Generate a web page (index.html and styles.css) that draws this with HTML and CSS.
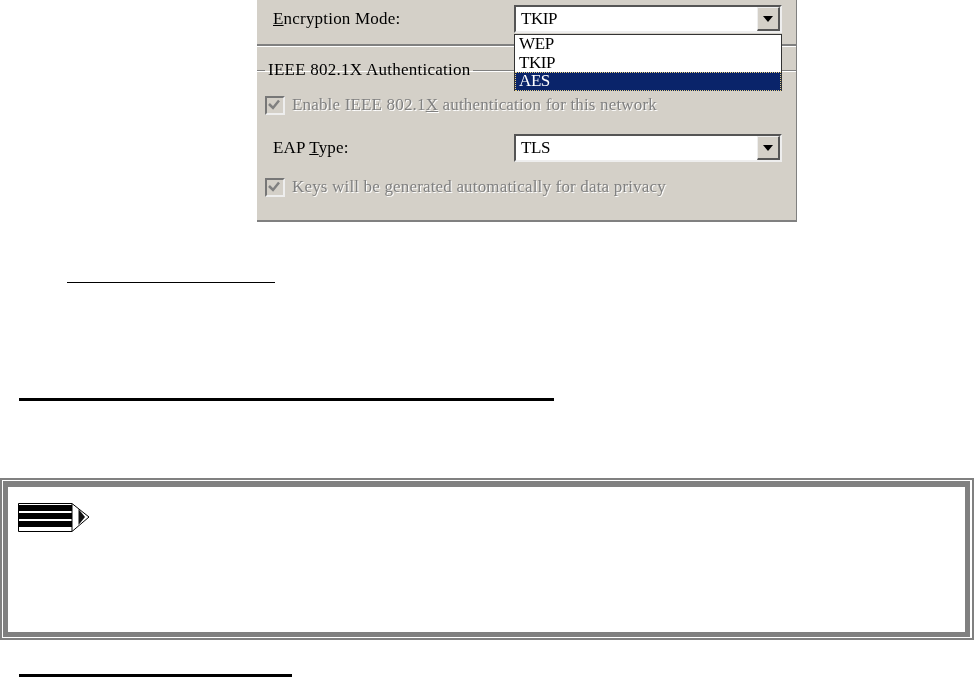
FILE: index.html
```html
<!DOCTYPE html>
<html lang="en">
<head>
    <meta charset="UTF-8">
    <title>Encryption Mode</title>
    <link rel="stylesheet" href="styles.css">
</head>
<body>

    <div class="dialog">
        <div class="top-row">
            <span class="field-label"><u>E</u>ncryption Mode:</span>
            <div class="combo-wrap">
                <div class="combo">
                    <span class="combo-text">TKIP</span>
                    <span class="combo-btn"><i class="arrow"></i></span>
                </div>
                <ul class="combo-list">
                    <li>WEP</li>
                    <li>TKIP</li>
                    <li class="selected">AES</li>
                </ul>
            </div>
        </div>

        <fieldset class="group">
            <legend>IEEE 802.1X Authentication</legend>
            <div class="check-row first-check">
                <span class="check"><svg width="14" height="13" viewBox="0 0 14 13"><path d="M2 6 L6 10 L12 2.5" fill="none" stroke="#808080" stroke-width="2.5"/></svg></span>
                <span class="disabled">Enable IEEE 802.1<u>X</u> authentication for this network</span>
            </div>
            <div class="eap-row">
                <span class="field-label">EAP <u>T</u>ype:</span>
                <div class="combo">
                    <span class="combo-text">TLS</span>
                    <span class="combo-btn"><i class="arrow"></i></span>
                </div>
            </div>
            <div class="check-row">
                <span class="check"><svg width="14" height="13" viewBox="0 0 14 13"><path d="M2 6 L6 10 L12 2.5" fill="none" stroke="#808080" stroke-width="2.5"/></svg></span>
                <span class="disabled">Keys will be generated automatically for data privacy</span>
            </div>
        </fieldset>
    </div>

    <div class="rule rule-short"></div>
    <div class="rule rule-heading"></div>

    <div class="note">
        <div class="note-inner">
            <svg class="pencil" width="72" height="29" viewBox="0 0 72 29">
                <path d="M0.5 0.5 H54 L71 14 L54 28.5 H0.5 Z" fill="#fff" stroke="#000"/>
                <rect x="1" y="2" width="53" height="6" fill="#000"/>
                <rect x="1" y="10" width="53" height="6" fill="#000"/>
                <rect x="1" y="18" width="53" height="6" fill="#000"/>
                <path d="M54 1 V28" fill="none" stroke="#000"/>
                <path d="M60.5 6 L67 14 L60.5 22 Z" fill="#111"/>
            </svg>
        </div>
    </div>

    <div class="rule rule-bottom"></div>

</body>
</html>
```

FILE: styles.css
```css
html, body {
    height: 677px;
    overflow: hidden;
}
body {
    margin: 0;
    background-color: #fff;
    font-family: "Liberation Serif", serif;
    color: #000;
}
.dialog {
    box-sizing: border-box;
    width: 540px;
    height: 222px;
    margin-left: 257px;
    background-color: #d4d0c8;
    border-right: 1px solid #808080;
    border-bottom: 2px solid #808080;
    font-size: 17px;
    filter: blur(0.35px);
}
.top-row {
    display: flex;
    align-items: flex-start;
    height: 46px;
    padding: 5px 0 0 16px;
    box-sizing: border-box;
    border-bottom: 2px solid #808080;
    box-shadow: 0 1px 0 #fff;
}
.field-label {
    width: 241px;
    padding-top: 4px;
    letter-spacing: 0.2px;
}
.combo-wrap {
    position: relative;
}
.combo {
    box-sizing: border-box;
    display: flex;
    justify-content: space-between;
    width: 268px;
    height: 28px;
    background-color: #fff;
    border: 2px solid;
    border-color: #555 #eee #eee #555;
}
.combo-text {
    padding: 2px 0 0 5px;
    font-size: 17px;
    letter-spacing: -0.4px;
}
.combo-btn {
    box-sizing: border-box;
    display: flex;
    align-items: center;
    justify-content: center;
    width: 23px;
    background-color: #d4d0c8;
    border: solid;
    border-width: 1px 2px 2px 1px;
    border-color: #eee #555 #555 #eee;
}
.arrow {
    border-top: 6px solid #000;
    border-left: 5px solid transparent;
    border-right: 5px solid transparent;
}
.combo-list {
    position: absolute;
    top: 29px;
    left: 0;
    box-sizing: border-box;
    width: 268px;
    height: 57px;
    margin: 0;
    padding: 0;
    list-style: none;
    background-color: #fff;
    border: 1px solid #333;
    font-size: 17px;
    letter-spacing: -0.4px;
}
.combo-list li {
    height: 18.5px;
    line-height: 18px;
    padding-left: 4px;
}
.combo-list .selected {
    background-color: #0a246a;
    color: #fff;
    outline: 1px dotted #e8d080;
    outline-offset: -1px;
}
.group {
    box-sizing: border-box;
    height: 159px;
    margin: 15px 0 0;
    padding: 0 0 0 8px;
    border: 0;
    border-top: 1px solid #808080;
    box-shadow: 0 1px 0 #fff inset;
}
.group legend {
    padding: 0 3px;
    font-size: 17px;
    line-height: 18px;
    letter-spacing: 0.25px;
}
.check-row {
    display: flex;
    align-items: center;
    gap: 7px;
}
.first-check {
    margin-top: 16px;
}
.check {
    box-sizing: border-box;
    display: block;
    width: 20px;
    height: 19px;
    background-color: #d4d0c8;
    border: 2px solid;
    border-color: #777 #eee #eee #777;
}
.check svg {
    display: block;
}
.disabled {
    color: #808080;
    text-shadow: 1px 1px 0 #fff;
    letter-spacing: 0.17px;
}
.eap-row {
    display: flex;
    margin: 19px 0 15px;
    padding-left: 8px;
}
.rule {
    background-color: #000;
}
.rule-short {
    width: 208px;
    height: 1px;
    margin: 60px 0 0 67px;
}
.rule-heading {
    width: 535px;
    height: 3px;
    margin: 115px 0 0 19px;
}
.note {
    box-sizing: border-box;
    width: 974px;
    height: 162px;
    margin-top: 77px;
    padding: 1px;
    background-color: #fff;
    border: 2px solid #808080;
}
.note-inner {
    box-sizing: border-box;
    width: 967px;
    height: 156px;
    padding: 16px 0 0 10px;
    border: 5px solid #808080;
    border-top-width: 6px;
}
.pencil {
    display: block;
}
.rule-bottom {
    width: 273px;
    height: 3px;
    margin: 34px 0 0 19px;
}
```
